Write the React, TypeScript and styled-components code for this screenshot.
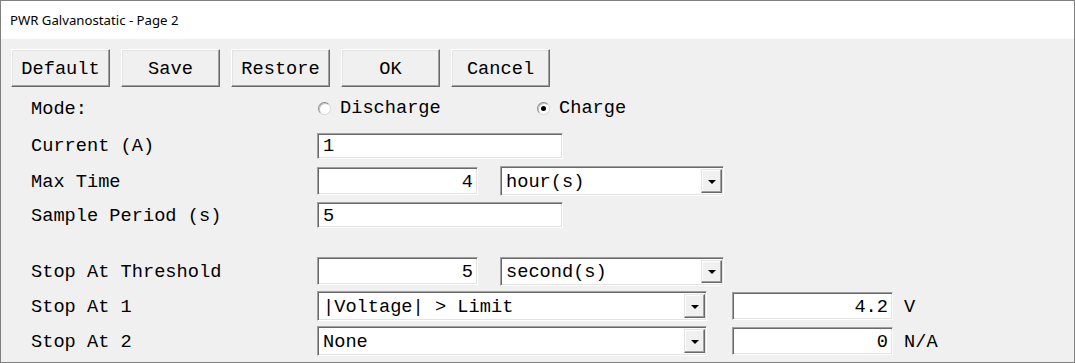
import styled, { createGlobalStyle } from "styled-components";

const colors = {
  face: "#f0f0f0",
  frame: "#808080",
  shadow: "#a0a0a0",
  darkShadow: "#696969",
  light: "#e3e3e3",
  hilite: "#ffffff",
  text: "#000000",
};

const mono = `"Liberation Mono", "Courier New", monospace`;

// ── Styled primitives ─────────────────────────────────────────────────────────

const GlobalStyle = createGlobalStyle`
  html, body { margin: 0; padding: 0; background: #fff; }
  * { box-sizing: border-box; }
`;

const Window = styled.div`
  width: 1075px;
  height: 363px;
  border: 1px solid ${colors.frame};
  background: ${colors.face};
  display: flex;
  flex-direction: column;
  overflow: hidden;
  font-family: ${mono};
  font-size: 18.67px;
  color: ${colors.text};
`;

const TitleBar = styled.div`
  flex: none;
  height: 38px;
  background: #fff;
  display: flex;
  align-items: center;
  padding-left: 9px;
  font-family: "Segoe UI", "Noto Sans", sans-serif;
  font-size: 13.2px;
`;

const Toolbar = styled.div`
  flex: none;
  display: flex;
  gap: 11px;
  height: 50px;
  padding: 10px 0 0 10px;
`;

const Button = styled.div`
  width: 99px;
  height: 38px;
  display: flex;
  align-items: center;
  justify-content: center;
  padding-top: 1px;
  background: ${colors.face};
  border: 1px solid;
  border-color: ${colors.hilite} ${colors.darkShadow} ${colors.darkShadow} ${colors.hilite};
  box-shadow: inset -1px -1px 0 ${colors.shadow}, inset 1px 1px 0 ${colors.light};
`;

const Form = styled.div`
  display: flex;
  flex-direction: column;
  padding-left: 30px;
`;

const Row = styled.div<{ $h: number }>`
  height: ${p => p.$h}px;
  display: flex;
  align-items: center;
`;

const Spacer = styled.div<{ $h: number }>`
  height: ${p => p.$h}px;
`;

const Label = styled.div`
  width: 286px;
  flex: none;
  white-space: pre;
  padding-top: 1px;
`;

const Controls = styled.div<{ $gap: number }>`
  display: flex;
  align-items: center;
  gap: ${p => p.$gap}px;
`;

const RadioOption = styled.div<{ $w?: number }>`
  display: flex;
  align-items: center;
  gap: 9px;
  padding-left: 1px;
  width: ${p => (p.$w ? `${p.$w}px` : "auto")};
`;

const RadioDot = styled.span<{ $checked: boolean }>`
  width: 13px;
  height: 13px;
  border-radius: 50%;
  background: #fff;
  border: 1px solid;
  border-color: #8c8c8c #d8d8d8 #d8d8d8 #8c8c8c;
  box-shadow: inset 1px 1px 0 #c4c4c4;
  display: flex;
  align-items: center;
  justify-content: center;
  &::after {
    content: "";
    width: 5px;
    height: 5px;
    border-radius: 50%;
    background: ${p => (p.$checked ? "#000" : "transparent")};
  }
`;

const sunken = `
  background: #fff;
  border: 1px solid;
  border-color: ${colors.shadow} ${colors.hilite} ${colors.hilite} ${colors.shadow};
  box-shadow: inset 1px 1px 0 ${colors.darkShadow}, inset -1px -1px 0 ${colors.light};
`;

const Field = styled.div<{ $w: number; $h: number; $right?: boolean }>`
  ${sunken}
  width: ${p => p.$w}px;
  height: ${p => p.$h}px;
  display: flex;
  align-items: center;
  justify-content: ${p => (p.$right ? "flex-end" : "flex-start")};
  padding: 1px 4px 0 5px;
  white-space: pre;
`;

const Select = styled.div<{ $w: number; $h: number }>`
  ${sunken}
  width: ${p => p.$w}px;
  height: ${p => p.$h}px;
  display: flex;
  align-items: stretch;
  padding: 2px 1px 2px 2px;
`;

const SelectValue = styled.div`
  flex: 1;
  display: flex;
  align-items: center;
  padding: 1px 0 0 3px;
  white-space: pre;
`;

const ArrowButton = styled.div`
  width: 21px;
  flex: none;
  display: flex;
  align-items: center;
  justify-content: center;
  background: ${colors.face};
  border: 1px solid;
  border-color: ${colors.light} ${colors.darkShadow} ${colors.darkShadow} ${colors.light};
  box-shadow: inset -1px -1px 0 ${colors.shadow}, inset 1px 1px 0 ${colors.hilite};
  &::after {
    content: "";
    border-left: 4px solid transparent;
    border-right: 4px solid transparent;
    border-top: 4px solid #000;
    margin-top: 1px;
  }
`;

const Unit = styled.span`
  margin-left: 11px;
  padding-top: 1px;
`;

// ── Sub-components ────────────────────────────────────────────────────────────

function Dropdown({ value, w, h }: { value: string; w: number; h: number }) {
  return (
    <Select $w={w} $h={h}>
      <SelectValue>{value}</SelectValue>
      <ArrowButton />
    </Select>
  );
}

// ── Main component ────────────────────────────────────────────────────────────

export default function App() {
  return (
    <>
      <GlobalStyle />
      <Window>
        <TitleBar>PWR Galvanostatic - Page 2</TitleBar>

        <Toolbar>
          {["Default", "Save", "Restore", "OK", "Cancel"].map(b => (
            <Button key={b}>{b}</Button>
          ))}
        </Toolbar>

        <Form>
          <Row $h={38}>
            <Label>Mode:</Label>
            <Controls $gap={0}>
              <RadioOption $w={219}>
                <RadioDot $checked={false} />
                Discharge
              </RadioOption>
              <RadioOption>
                <RadioDot $checked />
                Charge
              </RadioOption>
            </Controls>
          </Row>

          <Row $h={37}>
            <Label>Current (A)</Label>
            <Field $w={246} $h={26}>1</Field>
          </Row>

          <Row $h={34}>
            <Label>Max Time</Label>
            <Controls $gap={22}>
              <Field $w={161} $h={28} $right>4</Field>
              <Dropdown value="hour(s)" w={224} h={30} />
            </Controls>
          </Row>

          <Row $h={34}>
            <Label>Sample Period (s)</Label>
            <Field $w={246} $h={26}>5</Field>
          </Row>

          <Spacer $h={22} />

          <Row $h={34}>
            <Label>Stop At Threshold</Label>
            <Controls $gap={22}>
              <Field $w={161} $h={28} $right>5</Field>
              <Dropdown value="second(s)" w={224} h={29} />
            </Controls>
          </Row>

          <Row $h={36}>
            <Label>Stop At 1</Label>
            <Controls $gap={25}>
              <Dropdown value="|Voltage| > Limit" w={390} h={30} />
              <Field $w={161} $h={28} $right>4.2</Field>
            </Controls>
            <Unit>V</Unit>
          </Row>

          <Row $h={34}>
            <Label>Stop At 2</Label>
            <Controls $gap={25}>
              <Dropdown value="None" w={390} h={30} />
              <Field $w={161} $h={28} $right>0</Field>
            </Controls>
            <Unit>N/A</Unit>
          </Row>
        </Form>
      </Window>
    </>
  );
}
